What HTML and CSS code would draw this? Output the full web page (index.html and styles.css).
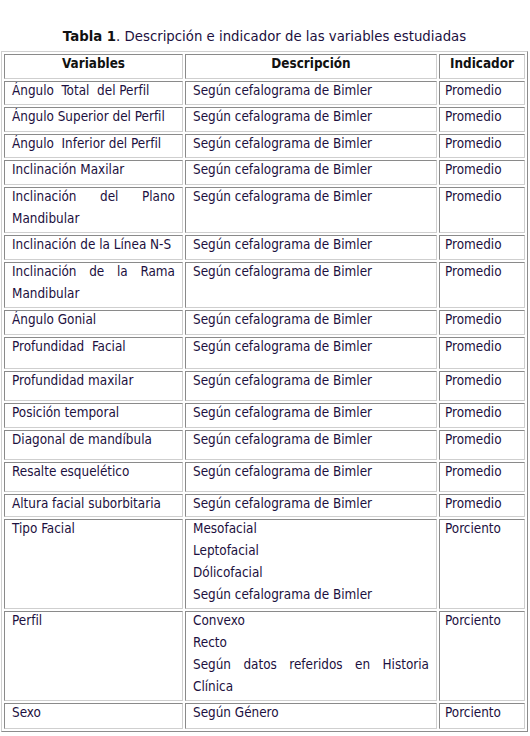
FILE: index.html
```html
<!DOCTYPE html>
<html lang="es">
<head>
<meta charset="utf-8">
<title>Tabla 1</title>
<link rel="stylesheet" href="styles.css">
</head>
<body>
<div class="page">
<table class="tbl">
<caption class="cap"><b>Tabla 1</b>. Descripción e indicador de las variables estudiadas</caption>
<colgroup><col class="c1"><col class="c2"><col class="c3"></colgroup>
<tbody>
<tr class="h25"><th><div class="in">Variables</div></th><th><div class="in">Descripción</div></th><th><div class="in">Indicador</div></th></tr>
<tr class="h24"><td><div class="in">Ángulo&nbsp; Total&nbsp; del Perfil</div></td><td><div class="in">Según cefalograma de Bimler</div></td><td class="ind"><div class="in">Promedio</div></td></tr>
<tr class="h25"><td><div class="in">Ángulo Superior del Perfil</div></td><td><div class="in">Según cefalograma de Bimler</div></td><td class="ind"><div class="in">Promedio</div></td></tr>
<tr class="h24"><td><div class="in">Ángulo&nbsp; Inferior del Perfil</div></td><td><div class="in">Según cefalograma de Bimler</div></td><td class="ind"><div class="in">Promedio</div></td></tr>
<tr class="h25"><td><div class="in">Inclinación Maxilar</div></td><td><div class="in">Según cefalograma de Bimler</div></td><td class="ind"><div class="in">Promedio</div></td></tr>
<tr class="h46"><td><div class="in"><span class="jl">Inclinación del Plano</span>Mandibular</div></td><td><div class="in">Según cefalograma de Bimler</div></td><td class="ind"><div class="in">Promedio</div></td></tr>
<tr class="h25"><td><div class="in">Inclinación de la Línea N-S</div></td><td><div class="in">Según cefalograma de Bimler</div></td><td class="ind"><div class="in">Promedio</div></td></tr>
<tr class="h46"><td><div class="in"><span class="jl">Inclinación de la Rama</span>Mandibular</div></td><td><div class="in">Según cefalograma de Bimler</div></td><td class="ind"><div class="in">Promedio</div></td></tr>
<tr class="h25"><td><div class="in">Ángulo Gonial</div></td><td><div class="in">Según cefalograma de Bimler</div></td><td class="ind"><div class="in">Promedio</div></td></tr>
<tr class="h32"><td><div class="in">Profundidad&nbsp; Facial</div></td><td><div class="in">Según cefalograma de Bimler</div></td><td class="ind"><div class="in">Promedio</div></td></tr>
<tr class="h30"><td><div class="in">Profundidad maxilar</div></td><td><div class="in">Según cefalograma de Bimler</div></td><td class="ind"><div class="in">Promedio</div></td></tr>
<tr class="h25"><td><div class="in">Posición temporal</div></td><td><div class="in">Según cefalograma de Bimler</div></td><td class="ind"><div class="in">Promedio</div></td></tr>
<tr class="h30"><td><div class="in">Diagonal de mandíbula</div></td><td><div class="in">Según cefalograma de Bimler</div></td><td class="ind"><div class="in">Promedio</div></td></tr>
<tr class="h30"><td><div class="in">Resalte esquelético</div></td><td><div class="in">Según cefalograma de Bimler</div></td><td class="ind"><div class="in">Promedio</div></td></tr>
<tr class="h23"><td><div class="in">Altura facial suborbitaria</div></td><td><div class="in">Según cefalograma de Bimler</div></td><td class="ind"><div class="in">Promedio</div></td></tr>
<tr class="h90"><td><div class="in">Tipo Facial</div></td><td><div class="in">Mesofacial<br>Leptofacial<br>Dólicofacial<br>Según cefalograma de Bimler</div></td><td class="ind"><div class="in">Porciento</div></td></tr>
<tr class="h90"><td><div class="in">Perfil</div></td><td><div class="in">Convexo<br>Recto<br><span class="jl">Según datos referidos en Historia</span>Clínica</div></td><td class="ind"><div class="in">Porciento</div></td></tr>
<tr class="h26"><td><div class="in">Sexo</div></td><td><div class="in">Según Género</div></td><td class="ind"><div class="in">Porciento</div></td></tr>
</tbody>
</table>
</div>
</body>
</html>
```
FILE: styles.css
```css
html, body {
  margin: 0;
  padding: 0;
  background: #ffffff;
}
.page {
  padding: 26px 0 0 1px;
  font-family: "DejaVu Sans Condensed", "DejaVu Sans", sans-serif;
  font-size: 13.4px;
  color: #1c1040;
}
.tbl {
  table-layout: fixed;
  width: 527px;
  border-collapse: separate;
  border-spacing: 2px;
  border: 1px solid;
  border-color: #d0d0d0 #8c8c8c #8c8c8c #d0d0d0;
}
.cap {
  font-family: "DejaVu Sans", sans-serif;
  font-size: 13.3px;
  line-height: 22px;
  padding-bottom: 3px;
  text-align: center;
  color: #1c1040;
}
.cap b {
  color: #111111;
}
.c1 { width: 179px; }
.c2 { width: 252px; }
.c3 { width: 86px; }
.tbl th,
.tbl td {
  border: 1px solid;
  border-color: #8a8a8a #cfcfcf #cfcfcf #8a8a8a;
  padding: 0 7px;
  vertical-align: top;
  text-align: left;
  white-space: nowrap;
  overflow: hidden;
  line-height: 22px;
}
.tbl th {
  text-align: center;
  font-weight: bold;
  color: #111111;
}
.tbl td.ind {
  padding: 0 5px;
}
.in {
  margin-top: -2px;
}
.jl {
  display: block;
  text-align: justify;
  text-align-last: justify;
}
.h23 > * { height: 21px; }
.h24 > * { height: 22px; }
.h25 > * { height: 23px; }
.h26 > * { height: 24px; }
.h30 > * { height: 28px; }
.h32 > * { height: 30px; }
.h46 > * { height: 44px; }
.h90 > * { height: 88px; }
```
